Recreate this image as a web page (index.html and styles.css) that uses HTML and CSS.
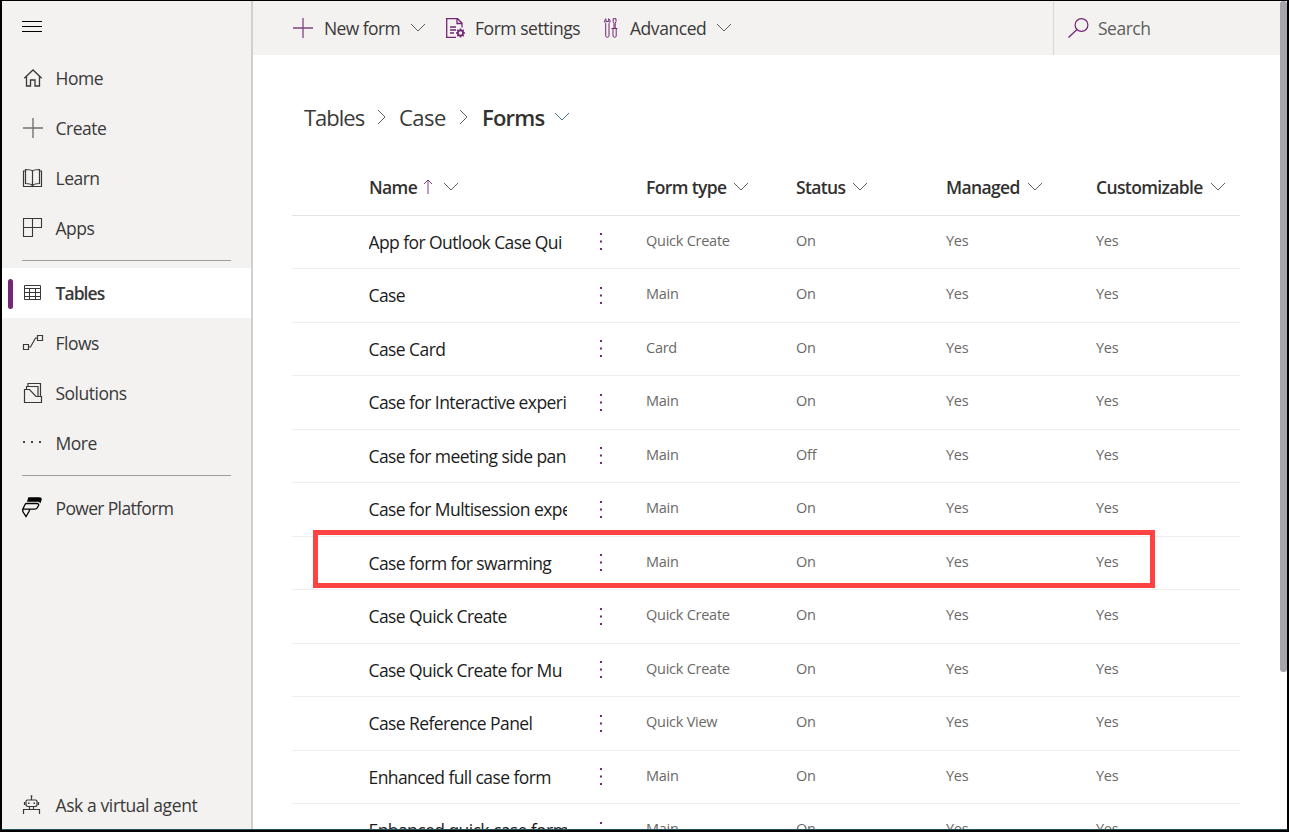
FILE: index.html
```html
<!DOCTYPE html>
<html lang="en">
<head>
<meta charset="utf-8">
<title>Forms</title>
<link rel="stylesheet" href="styles.css">
</head>
<body>
<svg class="defs" aria-hidden="true">
  <symbol id="chev" viewBox="0 0 16 10"><path d="M1 1l7 7 7-7" fill="none" stroke="currentColor"/></symbol>
  <symbol id="right" viewBox="0 0 10 16"><path d="M1 1l7 7-7 7" fill="none" stroke="currentColor"/></symbol>
  <symbol id="dots" viewBox="0 0 4 20"><path d="M1 1h2v2H1zM1 8.500h2v2H1zM1 16h2v2H1z" fill="#742774"/></symbol>
</svg>
<div class="app">
  <nav class="sidebar">
    <button class="menu" aria-label="Menu"><svg width="20" height="12"><path d="M0 .5h20M0 5.500h20M0 10.500h20" stroke="#000"/></svg></button>
    <a class="item"><svg class="ico" viewBox="0 0 20 20"><path d="M2.300 10.200L11 2l8.700 8.200M4.500 8.500v9.500h4V12h4.500v6h4.500V8.500" fill="none" stroke="currentColor" stroke-width="1.300"/></svg><span>Home</span></a>
    <a class="item"><svg class="ico" viewBox="0 0 20 20"><path d="M1 10h20M11 0v20" stroke="#73706d" stroke-width="1.400"/></svg><span>Create</span></a>
    <a class="item"><svg class="ico" viewBox="0 0 20 20"><path d="M3.500 3H1.500v15.500h18V3h-2M10.500 3v15M10.500 3C9 1.500 6 1.500 3.500 1.500v14c3 0 6 0 7 2.500 1-2.500 4-2.500 7-2.500v-14c-2.500 0-5.500 0-7 1.500z" fill="none" stroke="currentColor" stroke-width="1.200"/></svg><span>Learn</span></a>
    <a class="item"><svg class="ico" viewBox="0 0 20 20"><path d="M1.500.5h18v9h-18zM10.500.5v18h-9v-18" fill="none" stroke="currentColor" stroke-width="1.100"/></svg><span>Apps</span></a>
    <hr class="rule">
    <a class="item active"><svg class="ico" viewBox="0 0 20 20"><path d="M2.500 2.500h16v14h-16zM2.500 5.500h16M2.500 9.500h16M2.500 13.500h16M7.500 5.500v11M13.500 5.500v11" fill="none" stroke="currentColor"/></svg><span>Tables</span></a>
    <a class="item"><svg class="ico" viewBox="0 0 20 20"><path d="M1.500 11.500h5v5h-5zM15.500 2.500h5v5h-5zM6.500 14h2l5-9h2" fill="none" stroke="currentColor" stroke-width="1.200"/></svg><span>Flows</span></a>
    <a class="item"><svg class="ico" viewBox="0 0 20 20"><path d="M2.500 6.500h5l6.500 7h5.500v6h-17zM4.500 6V3.500h11.500v10M6 3.500v-3h12.500v13" fill="none" stroke="currentColor" stroke-width="1.200"/></svg><span>Solutions</span></a>
    <a class="item"><svg class="ico" viewBox="0 0 20 20"><path d="M1 8h2v2H1zM9 8h2v2H9zM17 8h2v2h-2z" fill="#444"/></svg><span>More</span></a>
    <hr class="rule">
    <a class="item"><svg class="ico" viewBox="0 0 20 20"><path d="M7-.8h10c2.500 0 3.200 1.300 2.500 3L18.300 5.600C17.500 4 16.500 3.800 15 3.800H5L6 .3C6.200-.5 6.500-.8 7-.8z" fill="#000"/><path d="M4.500 5.500h10.500c1.500 0 2 1 1.500 2l-1.200 2.300c-.5 1-1.200 1.400-2.500 1.400H.8L3 6.500c.4-.7.800-1 1.500-1zM.8 11.200v2.300L4 18.500l3-5 .8-2.300" fill="none" stroke="#000" stroke-width="1.300"/></svg><span class="tight">Power Platform</span></a>
    <a class="item agent"><svg class="ico" viewBox="0 0 20 20"><path d="M9.500 1v4M5.500 5h8c1.200 0 1.500.5 1.500 1.500v3c0 1.200-.5 2-2 2H6c-1.500 0-2-.8-2-2v-3C4 5.500 4.300 5 5.500 5zM2.500 7v3M16.500 7v3M7.500 11.500v3M11.500 11.500v3M1.500 19v-4.500h16V19" fill="none" stroke="currentColor" stroke-width="1.200"/><path d="M6 7.500h1.500V9H6zM11.500 7.500H13V9h-1.500zM8.700.2h1.600v1.600H8.700z" fill="currentColor"/></svg><span>Ask a virtual agent</span></a>
  </nav>
  <main class="main">
    <header class="bar">
      <svg class="plus" width="20" height="20"><path d="M0 10h20M10 0v20" stroke="#80457f" stroke-width="1.300"/></svg>
      <span class="new">New form</span><svg class="chev c1"><use href="#chev"/></svg>
      <svg class="formico" width="20" height="20" fill="none" stroke="#742774" stroke-width="1.300"><path d="M10 19.300H.7V.7h10.800L16 5v4.500M11 .7V5.500h5M4 9h6M4 12h6M4 15h4"/><circle cx="14.500" cy="15" r="2.600" stroke-width="1.700"/><path d="M14.500 10.500v2M14.500 17.500v2M10 15h2M17 15h2M11.300 11.800l1.400 1.400M16.300 16.800l1.400 1.400M11.300 18.200l1.400-1.400M16.300 13.200l1.400-1.400" stroke-width="1.600"/></svg>
      <span class="settings">Form settings</span>
      <svg class="tools" width="14" height="20" fill="none" stroke="#742774"><path d="M2 .7C.3 1.500.3 4.500 1.700 5.500v12.300c0 2 3.300 2 3.300 0V5.500C6.500 4.500 6.500 1.500 4.700.7v2.800H2zM9.200.7h2.800v3l-.8 1.500v5.300h-1.200V5.200l-.8-1.500zM7.500 10.500h6M9 10.500v7.500c0 1.800 3.200 1.800 3.200 0v-7.500"/></svg>
      <span class="advanced">Advanced</span><svg class="chev c2"><use href="#chev"/></svg>
      <div class="search"><svg width="21" height="20" fill="none" stroke="#742774" stroke-width="1.200"><circle cx="13.500" cy="7" r="6.400"/><path d="M9 11.500L.5 19.500"/></svg><span>Search</span></div>
    </header>
    <div class="crumbs"><span class="cr1">Tables</span><svg class="right"><use href="#right"/></svg><span class="cr2">Case</span><svg class="right r2"><use href="#right"/></svg><b>Forms</b><svg class="chev blue"><use href="#chev"/></svg></div>
    <section class="grid">
      <div class="row head"><span></span><span>Name<svg class="up" width="10" height="15"><path d="M5 15V1M1 5l4-4 4 4" fill="none" stroke="#742774" stroke-width=".9"/></svg><svg class="chev"><use href="#chev"/></svg></span><span></span><span>Form type<svg class="chev"><use href="#chev"/></svg></span><span>Status<svg class="chev"><use href="#chev"/></svg></span><span>Managed<svg class="chev"><use href="#chev"/></svg></span><span>Customizable<svg class="chev"><use href="#chev"/></svg></span></div>
      <div class="row"><i></i><span class="name">App for Outlook Case Qui</span><svg class="dots"><use href="#dots"/></svg><span>Quick Create</span><span>On</span><span>Yes</span><span>Yes</span></div>
      <div class="row"><i></i><span class="name">Case</span><svg class="dots"><use href="#dots"/></svg><span>Main</span><span>On</span><span>Yes</span><span>Yes</span></div>
      <div class="row"><i></i><span class="name">Case Card</span><svg class="dots"><use href="#dots"/></svg><span>Card</span><span>On</span><span>Yes</span><span>Yes</span></div>
      <div class="row"><i></i><span class="name">Case for Interactive experi</span><svg class="dots"><use href="#dots"/></svg><span>Main</span><span>On</span><span>Yes</span><span>Yes</span></div>
      <div class="row"><i></i><span class="name">Case for meeting side pan</span><svg class="dots"><use href="#dots"/></svg><span>Main</span><span>Off</span><span>Yes</span><span>Yes</span></div>
      <div class="row"><i></i><span class="name">Case for Multisession expe</span><svg class="dots"><use href="#dots"/></svg><span>Main</span><span>On</span><span>Yes</span><span>Yes</span></div>
      <div class="row marked"><i></i><span class="name">Case form for swarming</span><svg class="dots"><use href="#dots"/></svg><span>Main</span><span>On</span><span>Yes</span><span>Yes</span></div>
      <div class="row"><i></i><span class="name">Case Quick Create</span><svg class="dots"><use href="#dots"/></svg><span>Quick Create</span><span>On</span><span>Yes</span><span>Yes</span></div>
      <div class="row"><i></i><span class="name">Case Quick Create for Mu</span><svg class="dots"><use href="#dots"/></svg><span>Quick Create</span><span>On</span><span>Yes</span><span>Yes</span></div>
      <div class="row"><i></i><span class="name">Case Reference Panel</span><svg class="dots"><use href="#dots"/></svg><span>Quick View</span><span>On</span><span>Yes</span><span>Yes</span></div>
      <div class="row"><i></i><span class="name">Enhanced full case form</span><svg class="dots"><use href="#dots"/></svg><span>Main</span><span>On</span><span>Yes</span><span>Yes</span></div>
      <div class="row"><i></i><span class="name">Enhanced quick case form</span><svg class="dots"><use href="#dots"/></svg><span>Main</span><span>On</span><span>Yes</span><span>Yes</span></div>
    </section>
  </main>
  <div class="track"><div class="thumb"></div></div>
</div>
</body>
</html>
```
FILE: styles.css
```css
*, *::before, *::after { box-sizing: border-box; }
html { background: #000; }
body { margin: 0; padding: 1px 2px 2px; height: 832px; font-family: "Open Sans", sans-serif; font-size: 17.5px; letter-spacing: -0.5px; color: #3a3938; }
svg { display: block; flex: none; }
.defs { display: none; }
.app { display: flex; width: 1285px; height: 829px; border-bottom: 1px solid #24505d; overflow: hidden; background: #fff; }
.sidebar { display: flex; flex-direction: column; width: 251px; height: 828px; flex: none; background: #f3f2f1; border-right: 2px solid #d0cfce; }
.menu { display: block; border: 0; background: none; padding: 20px 20px 0; height: 52px; flex: none; }
.menu svg { margin-bottom: 20px; }
.item { display: flex; align-items: center; height: 50px; flex: none; padding-left: 20px; }
.item span { margin-left: 13.5px; line-height: 24px; white-space: nowrap; }
.item .tight { letter-spacing: -0.65px; }
.ico { width: 20px; height: 20px; overflow: visible; }
.rule { width: 209px; height: 1px; margin: 7px 20px; border: 0; background: #a09f9d; flex: none; }
.active { position: relative; background: #fff; font-weight: 600; letter-spacing: -0.95px; }
.active::before { content: ""; position: absolute; left: 6px; top: 11px; width: 5px; height: 30px; border-radius: 3px; background: #742774; }
.agent { margin-top: auto; margin-bottom: -1px; letter-spacing: -0.4px; }
.main { width: 1027px; flex: none; }
.bar { display: flex; align-items: center; height: 54px; background: #f3f2f1; padding-left: 40px; white-space: nowrap; }
.chev { width: 16px; height: 10px; color: #605e5c; }
.new { width: 77px; margin-left: 11px; letter-spacing: -0.6px; }
.c1 { margin-left: 9px; }
.formico { margin-left: 20px; }
.settings { width: 106px; margin-left: 9px; letter-spacing: -0.45px; }
.tools { margin-left: 23px; }
.advanced { width: 77px; margin-left: 12px; letter-spacing: -0.45px; }
.c2 { margin-left: 9px; }
.search { display: flex; align-items: center; gap: 9px; width: 227px; height: 54px; margin-left: auto; padding-left: 14px; border-left: 1px solid #d8d7d6; color: #605e5c; }
.crumbs { display: flex; align-items: center; height: 40px; margin: 42px 0 1px 51px; font-size: 22px; letter-spacing: -0.5px; }
.cr1 { width: 61px; letter-spacing: -1px; }
.right { width: 10px; height: 16px; margin: 0 12px; color: #605e5c; }
.cr2 { width: 48px; }
.r2 { margin: 0 13px 0 12px; }
.crumbs b { width: 63px; font-weight: 600; letter-spacing: -0.8px; color: #323130; }
.blue { margin-left: 9px; color: #4d7287; }
.grid { width: 948px; margin-left: 39px; padding-top: 22px; }
.row { display: grid; grid-template-columns: 77px 198px 79px 150px 150px 150px 144px; align-items: center; height: 53px; border-bottom: 1px solid #f0efee; font-size: 14.5px; letter-spacing: -0.25px; color: #6b6967; white-space: nowrap; }
.row:nth-child(odd) { height: 54px; }
.row > span { padding-bottom: 4px; }
.row .name { overflow: hidden; margin-left: -.5px; padding: 0 0 1px; font-size: 17.5px; letter-spacing: -0.58px; color: #1c1c1c; }
.dots { width: 4px; height: 20px; margin-left: 32px; }
.row.head { height: 56px; font-size: 17.5px; letter-spacing: -0.63px; font-weight: 600; color: #323130; border-color: #e4e3e2; }
.row.head > span { display: flex; align-items: center; padding: 0 0 2px; }
.row.head .chev { margin-left: 7px; }
.row.head .up { margin-left: 6px; }
.row.head .up + .chev { margin-left: 10px; }
.marked { position: relative; }
.marked::after { content: ""; position: absolute; left: 21px; top: -7px; width: 842px; height: 58px; border: 5px solid #ff4343; }
.track { width: 7px; }
.thumb { height: 671px; border-radius: 3px; background: #a6a6aa; }
```
